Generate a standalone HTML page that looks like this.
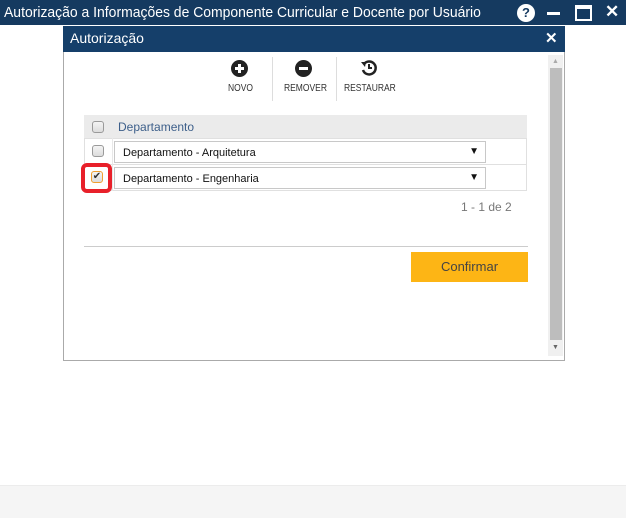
<!DOCTYPE html>
<html><head><meta charset="utf-8"><style>
*{margin:0;padding:0;box-sizing:border-box}
body{width:626px;height:518px;background:#fff;font-family:"Liberation Sans",sans-serif;position:relative;overflow:hidden}
.a{position:absolute;white-space:nowrap}
.cb{position:absolute;width:12px;height:12px;border:1px solid #9a9a9a;border-radius:3px;background:linear-gradient(#f4f4f4,#dcdcdc)}
.sel{position:absolute;left:114px;width:372px;height:22px;border:1px solid #c8c8c8;background:#fff;font-size:11px;color:#111;padding:5px 0 0 8px}
.sel span{position:absolute;right:6px;top:4px;font-size:10px}
</style></head><body>
<div class="a" style="left:0;top:0;width:626px;height:25px;background:#153a60"></div>
<div class="a" style="left:4px;top:4px;color:#fff;font-size:15px;transform:scaleX(0.93);transform-origin:0 0">Autorização a Informações de Componente Curricular e Docente por Usuário</div>
<div class="a" style="left:517px;top:4px;width:18px;height:18px;border-radius:50%;background:#fff;color:#153a60;font-size:13px;font-weight:bold;text-align:center;line-height:18px">?</div>
<div class="a" style="left:547px;top:12px;width:13px;height:3px;background:#fff"></div>
<div class="a" style="left:575px;top:5px;width:17px;height:16px;border:2px solid #fff;border-top-width:4px"></div>
<div class="a" style="left:605px;top:2px;color:#fff;font-size:17px;font-weight:bold">✕</div>
<div class="a" style="left:0;top:485px;width:626px;height:33px;background:#f5f5f5;border-top:1px solid #ececec"></div>

<div class="a" style="left:63px;top:26px;width:502px;height:335px;border:1px solid #aaa;background:#fff"></div>
<div class="a" style="left:63px;top:26px;width:502px;height:26px;background:#153f6a"></div>
<div class="a" style="left:70px;top:30px;color:#fff;font-size:14px">Autorização</div>
<div class="a" style="left:545px;top:29px;color:#fff;font-size:15px;font-weight:bold">✕</div>
<div class="a" style="left:548px;top:55px;width:15px;height:301px;background:#f0f0f0"></div>
<div class="a" style="left:550px;top:68px;width:12px;height:272px;background:#bdbdbd"></div>
<div class="a" style="left:552px;top:58px;font-size:7px;color:#aaa">▲</div>
<div class="a" style="left:552px;top:344px;font-size:7px;color:#666">▼</div>

<div class="a" style="left:231px;top:60px;width:17px;height:17px;border-radius:50%;background:#222"><div style="position:absolute;left:4px;top:7px;width:9px;height:3px;background:#fff"></div><div style="position:absolute;left:7px;top:4px;width:3px;height:9px;background:#fff"></div></div>
<div class="a" style="left:295px;top:60px;width:17px;height:17px;border-radius:50%;background:#222"><div style="position:absolute;left:4px;top:7px;width:9px;height:3px;background:#fff"></div></div>
<svg class="a" style="left:360px;top:59px" width="18" height="18" viewBox="0 0 18 18"><path d="M4 5 A6.5 6.5 0 1 1 3 11" fill="none" stroke="#222" stroke-width="2.5"/><path d="M1 3 L6 3 L5 8 Z" fill="#222"/><path d="M9 5 V9 H12" fill="none" stroke="#222" stroke-width="2"/></svg>
<div class="a" style="left:228px;top:83px;font-size:10px;color:#333;transform:scaleX(0.85);transform-origin:0 0">NOVO</div>
<div class="a" style="left:284px;top:83px;font-size:10px;color:#333;transform:scaleX(0.85);transform-origin:0 0">REMOVER</div>
<div class="a" style="left:344px;top:83px;font-size:10px;color:#333;transform:scaleX(0.85);transform-origin:0 0">RESTAURAR</div>
<div class="a" style="left:272px;top:57px;width:1px;height:44px;background:#ddd"></div>
<div class="a" style="left:336px;top:57px;width:1px;height:44px;background:#ddd"></div>

<div class="a" style="left:84px;top:115px;width:443px;height:23px;background:#ebebeb"></div>
<div class="cb" style="left:92px;top:121px"></div>
<div class="a" style="left:118px;top:120px;font-size:12px;color:#3d5f8a">Departamento</div>
<div class="a" style="left:84px;top:138px;width:443px;height:53px;border:1px solid #e0e0e0"></div>
<div class="a" style="left:84px;top:164px;width:443px;height:1px;background:#e0e0e0"></div>
<div class="a" style="left:112px;top:138px;width:1px;height:53px;background:#e8e8e8"></div>
<div class="cb" style="left:92px;top:145px"></div>
<div class="sel" style="top:141px">Departamento - Arquitetura<span>▼</span></div>
<div class="a" style="left:81px;top:163px;width:31px;height:30px;border:4px solid #e8202a;border-radius:6px"></div>
<div class="cb" style="left:91px;top:171px;border-color:#f0a030;font-size:10px;line-height:10px;text-align:center;color:#333">✔</div>
<div class="sel" style="top:167px">Departamento - Engenharia<span>▼</span></div>
<div class="a" style="left:461px;top:200px;font-size:12px;color:#777">1 - 1 de 2</div>
<div class="a" style="left:84px;top:246px;width:444px;height:1px;background:#ccc"></div>
<div class="a" style="left:411px;top:252px;width:117px;height:30px;background:#fdb515;color:#444;font-size:13px;text-align:center;line-height:30px">Confirmar</div>
</body></html>
